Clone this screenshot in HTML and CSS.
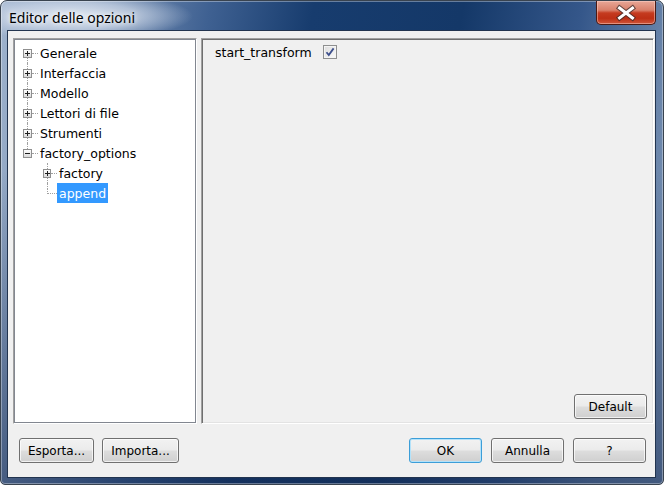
FILE: index.html
```html
<!DOCTYPE html>
<html>
<head>
<meta charset="utf-8">
<link rel="stylesheet" href="styles.css">
</head>
<body>
<div class="window">
  <div class="titlebar">
    <span class="title">Editor delle opzioni</span>
    <div class="close">
      <svg width="58" height="22" viewBox="0 0 58 22">
        <path d="M22.5 6 L35.5 16 M35.5 6 L22.5 16" stroke="#3a2a2a" stroke-width="5" stroke-linecap="square" fill="none" opacity="0.75"/>
        <path d="M22.5 6 L35.5 16 M35.5 6 L22.5 16" stroke="#ffffff" stroke-width="3" stroke-linecap="square" fill="none"/>
      </svg>
    </div>
  </div>
  <div class="client">
    <div class="main">
      <div class="tree">
        <div class="row">
          <div class="branch nup"><i class="up"></i><span class="mid"><b class="box plus"></b><i class="h"></i></span><i class="down"></i></div>
          <span class="label">Generale</span>
        </div>
        <div class="row">
          <div class="branch"><i class="up"></i><span class="mid"><b class="box plus"></b><i class="h"></i></span><i class="down"></i></div>
          <span class="label">Interfaccia</span>
        </div>
        <div class="row">
          <div class="branch"><i class="up"></i><span class="mid"><b class="box plus"></b><i class="h"></i></span><i class="down"></i></div>
          <span class="label">Modello</span>
        </div>
        <div class="row">
          <div class="branch"><i class="up"></i><span class="mid"><b class="box plus"></b><i class="h"></i></span><i class="down"></i></div>
          <span class="label">Lettori di file</span>
        </div>
        <div class="row">
          <div class="branch"><i class="up"></i><span class="mid"><b class="box plus"></b><i class="h"></i></span><i class="down"></i></div>
          <span class="label">Strumenti</span>
        </div>
        <div class="row">
          <div class="branch ndown"><i class="up"></i><span class="mid"><b class="box minus"></b><i class="h"></i></span><i class="down"></i></div>
          <span class="label">factory_options</span>
        </div>
        <div class="row child">
          <div class="branch"><i class="up"></i><span class="mid"><b class="box plus"></b><i class="h"></i></span><i class="down"></i></div>
          <span class="label">factory</span>
        </div>
        <div class="row child">
          <div class="branch ndown"><i class="up"></i><span class="mid"><i class="elbow"></i></span><i class="down"></i></div>
          <span class="label selected">append</span>
        </div>
      </div>
      <div class="panel">
        <div class="opt">
          <span class="opt-name">start_transform</span>
          <span class="check">
            <svg width="14" height="14" viewBox="0 0 14 14">
              <path d="M3.5 7.2 L5.8 10 L10.6 3.4" stroke="#3d4f8c" stroke-width="1.8" fill="none"/>
            </svg>
          </span>
        </div>
        <div class="panel-foot">
          <button class="btn def">Default</button>
        </div>
      </div>
    </div>
    <div class="footer">
      <div class="group">
        <button class="btn esporta">Esporta...</button>
        <button class="btn importa">Importa...</button>
      </div>
      <div class="group">
        <button class="btn std ok">OK</button>
        <button class="btn std">Annulla</button>
        <button class="btn std">?</button>
      </div>
    </div>
  </div>
</div>
</body>
</html>
```

FILE: styles.css
```css
html, body {
  margin: 0;
  padding: 0;
  background: #ffffff;
}

.window {
  width: 664px;
  height: 485px;
  box-sizing: border-box;
  border: 1px solid #39434f;
  border-radius: 7px 7px 5px 5px;
  padding: 0 7px 6px 6px;
  display: flex;
  flex-direction: column;
  background:
    radial-gradient(ellipse 120px 24px at 72px 15px, rgba(226,233,243,0.97) 0%, rgba(205,216,232,0.7) 55%, rgba(200,212,230,0) 100%),
    linear-gradient(to bottom, rgba(20,40,80,0) 35%, rgba(18,40,80,0.55) 100%),
    linear-gradient(100deg, #9fb3cd 0%, #8299ba 12%, #3f6192 28%, #173c6e 42%, #143868 62%, #35578a 78%, #6a85aa 90%, #7d95b6 100%);
  box-shadow: inset 0 0 0 1px rgba(255,255,255,0.35);
  overflow: hidden;
}

.titlebar {
  height: 29px;
  display: flex;
  justify-content: space-between;
  align-items: flex-start;
  flex: none;
}

.title {
  padding: 8px 0 0 2px;
  font: 14px "Noto Sans", "DejaVu Sans", sans-serif;
  line-height: 18px;
  color: #000;
  text-shadow: 0 0 8px #fff, 0 0 4px rgba(255,255,255,0.9);
}

.close {
  width: 60px;
  height: 24px;
  box-sizing: border-box;
  border: 1px solid #4a1a14;
  border-top: none;
  border-radius: 0 0 5px 5px;
  background:
    linear-gradient(to bottom, #e8a797 0%, #d9806b 40%, #c53b20 52%, #bd2f15 75%, #d0563a 100%);
  box-shadow: inset 0 0 0 1px rgba(255,220,210,0.45);
  display: flex;
  justify-content: center;
  align-items: center;
}

.close svg {
  display: block;
}

.client {
  flex: 1;
  background: #f0f0f0;
  border: 1px solid #22344f;
  padding: 7px 1px 14px 5px;
  display: flex;
  flex-direction: column;
  font: 12.5px "DejaVu Sans", Verdana, sans-serif;
  color: #000;
}

.main {
  height: 386px;
  display: flex;
  gap: 4px;
  flex: none;
}

.tree {
  width: 184px;
  box-sizing: border-box;
  background: #fff;
  border: 1px solid;
  border-color: #a0a0a0 #ffffff #ffffff #a0a0a0;
  box-shadow: inset 1px 1px 0 #828790, inset -1px -1px 0 #828790;
  padding: 4px 1px 1px 1px;
}

.row {
  height: 20px;
  display: flex;
  align-items: stretch;
}

.row.child {
  padding-left: 20px;
}

.branch {
  width: 23px;
  flex: none;
  display: flex;
  flex-direction: column;
}

.row.child .branch {
  width: 22px;
}

.branch .up,
.branch .down {
  display: block;
  margin-left: 12px;
  width: 0;
  border-left: 1px dotted #a0a0a0;
}

.branch .up {
  height: 6px;
}

.branch .down {
  height: 5px;
}

.branch.nup .up,
.branch.ndown .down {
  border-left-color: transparent;
}

.branch .mid {
  height: 9px;
  display: flex;
  align-items: center;
}

.box {
  display: block;
  margin-left: 8px;
  width: 9px;
  height: 9px;
  box-sizing: border-box;
  border: 1px solid #8f8f8f;
  background: linear-gradient(#fdfdfd, #dcdcdc);
}

.box.plus {
  background:
    linear-gradient(#1e1e1e, #1e1e1e) 1px 3px / 5px 1px no-repeat,
    linear-gradient(#1e1e1e, #1e1e1e) 3px 1px / 1px 5px no-repeat,
    linear-gradient(#fdfdfd, #dadada);
}

.box.minus {
  background:
    linear-gradient(#1e1e1e, #1e1e1e) 1px 3px / 5px 1px no-repeat,
    linear-gradient(#fdfdfd, #dadada);
}

.branch .h {
  display: block;
  width: 6px;
  height: 0;
  border-top: 1px dotted #a0a0a0;
}

.branch .elbow {
  display: block;
  align-self: flex-start;
  margin-left: 12px;
  width: 10px;
  height: 5px;
  box-sizing: border-box;
  border-left: 1px dotted #a0a0a0;
  border-bottom: 1px dotted #a0a0a0;
}

.label {
  height: 20px;
  box-sizing: border-box;
  padding: 1px 2px 0;
  line-height: 19px;
  white-space: nowrap;
}

.label.selected {
  background: #3399ff;
  color: #fff;
}

.panel {
  flex: 1;
  box-sizing: border-box;
  border: 1px solid;
  border-color: #a0a0a0 #ffffff #ffffff #a0a0a0;
  box-shadow: inset 1px 1px 0 #6f6f6f, inset -1px -1px 0 #e3e3e3;
  display: flex;
  flex-direction: column;
  padding: 3px 6px 4px 13px;
}

.opt {
  height: 20px;
  display: flex;
  align-items: center;
}

.opt-name {
  padding-top: 1px;
}

.check {
  margin-left: 11px;
  width: 14px;
  height: 14px;
  box-sizing: border-box;
  border: 1px solid #8e8f8f;
  background: linear-gradient(135deg, #dcdcdc, #fbfbfb);
  box-shadow: inset 0 0 0 1px #f4f4f4;
  display: flex;
}

.check svg {
  margin: -1px;
}

.panel-foot {
  margin-top: auto;
  display: flex;
  justify-content: flex-end;
}

.btn {
  height: 25px;
  box-sizing: border-box;
  border: 1px solid #707070;
  border-radius: 3px;
  background: linear-gradient(to bottom, #f2f2f2 0%, #ebebeb 48%, #dddddd 52%, #cfcfcf 100%);
  box-shadow: inset 0 0 0 1px rgba(255,255,255,0.7);
  font: 12px "DejaVu Sans", Verdana, sans-serif;
  color: #000;
  padding: 0;
  margin: 0;
}

.btn.def {
  width: 73px;
}

.btn.esporta {
  width: 75px;
}

.btn.importa {
  width: 77px;
}

.btn.std {
  width: 73px;
}

.btn.ok {
  border-color: #3c9ed8;
  box-shadow: inset 0 0 0 1px #b3e2fa;
}

.footer {
  margin-top: 14px;
  height: 25px;
  display: flex;
  justify-content: space-between;
  padding: 0 8px 0 6px;
}

.group {
  display: flex;
  gap: 9px;
}

.group:first-child {
  gap: 8px;
}
```
